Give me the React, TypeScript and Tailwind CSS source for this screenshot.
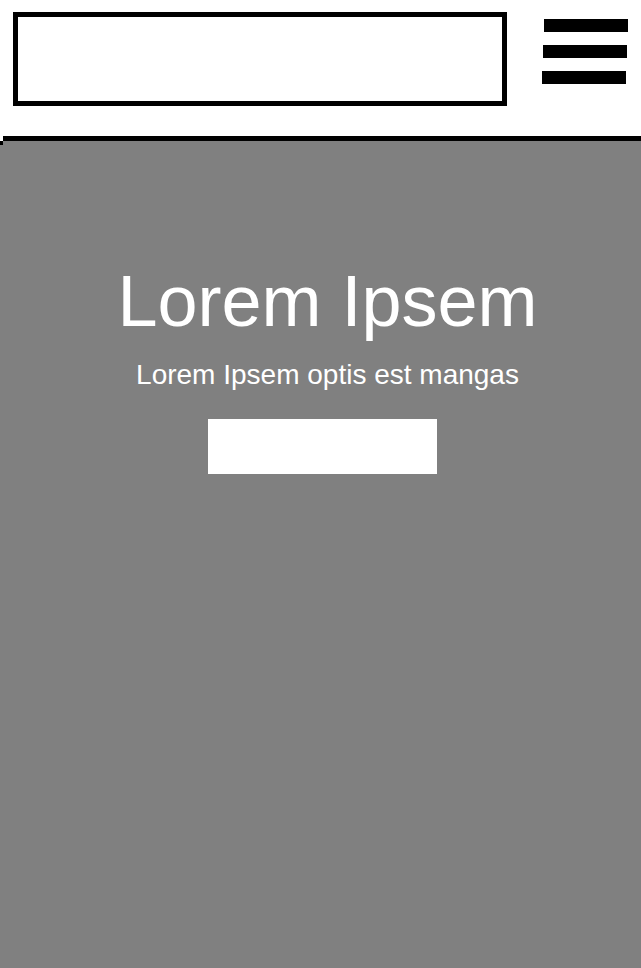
export default function App() {
  return (
    <div className="min-h-[968px] flex flex-col bg-white" style={{ fontFamily: '"Liberation Sans", Arial, sans-serif' }}>
      {/* Header */}
      <header className="h-[136px] flex items-start justify-between pl-[13px] pr-[13px] pt-[12px]">
        <div className="w-[494px] h-[94px] border-[5px] border-black bg-white" />
        <button className="flex flex-col gap-[13px] pt-[7px]" aria-label="menu">
          <span className="block w-[84px] h-[13px] bg-black ml-[2px]" />
          <span className="block w-[84px] h-[13px] bg-black ml-[1px]" />
          <span className="block w-[84px] h-[13px] bg-black" />
        </button>
      </header>
      <div className="h-[5px] bg-black ml-[3px]" />

      {/* Hero */}
      <section className="relative flex-1 bg-[#808080] flex flex-col items-center pt-[124px]">
        <div className="absolute top-0 left-0 w-[3px] h-[4px] bg-black" />
        <div className="flex flex-col items-center pl-[14px] text-white">
          <h1 className="text-[72px] leading-none font-normal">Lorem Ipsem</h1>
          <p className="text-[28px] leading-none mt-[24px]">Lorem Ipsem optis est mangas</p>
        </div>
        <button className="mt-[30px] ml-[4px] w-[229px] h-[55px] bg-white" />
      </section>
    </div>
  );
}
